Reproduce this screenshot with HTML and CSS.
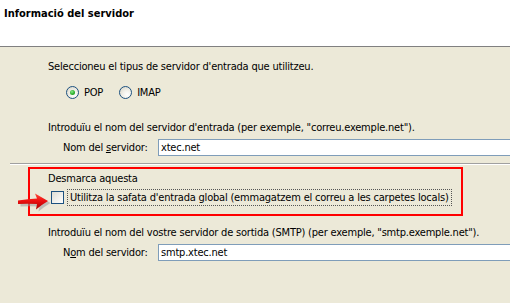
FILE: index.html
```html
<!DOCTYPE html>
<html>
<head>
<meta charset="utf-8">
<link rel="stylesheet" href="styles.css">
</head>
<body>
<div class="header"><h1 class="title">Informació del servidor</h1></div>
<div class="content">
  <p class="text first">Seleccioneu el tipus de servidor d'entrada que utilitzeu.</p>
  <div class="radios">
    <span class="radio checked"></span><span class="rlabel pop">POP</span>
    <span class="radio"></span><span class="rlabel">IMAP</span>
  </div>
  <p class="text p2">Introduïu el nom del servidor d'entrada (per exemple, "correu.exemple.net").</p>
  <div class="field">
    <span class="flabel">Nom del <u>s</u>ervidor:</span>
    <span class="input">xtec.net</span>
  </div>
  <div class="groove"></div>
  <p class="text p3">Desmarca aquesta</p>
  <div class="checkrow">
    <span class="checkbox"></span>
    <span class="clabel">Utilitza la safata d'entrada global (emmagatzem el correu a les carpetes locals)</span>
  </div>
  <p class="text p4">Introduïu el nom del vostre servidor de sortida (SMTP) (per exemple, "smtp.exemple.net").</p>
  <div class="field">
    <span class="flabel">N<u>o</u>m del servidor:</span>
    <span class="input">smtp.xtec.net</span>
  </div>
</div>
<div class="redbox"></div>
<svg class="arrow" width="34" height="22" viewBox="0 0 34 22">
  <defs>
    <linearGradient id="ag" x1="0" y1="0" x2="0" y2="1">
      <stop offset="0" stop-color="#ff4a3a"/>
      <stop offset="0.45" stop-color="#ee1010"/>
      <stop offset="1" stop-color="#a80000"/>
    </linearGradient>
  </defs>
  <path d="M2 10 Q12 8.5 21 8 L19 3 Q26 7 32 10.5 Q26 14 20 19 L21 14 Q12 13.5 2 14 Z" fill="#9a9a9a" opacity="0.55" transform="translate(1.5,1.5)"/>
  <path d="M1 9.5 Q11 8 20 7.5 L18 2.5 Q25 6.5 31 10 Q25 13.5 19 18.5 L20 13 Q11 12.5 1 13 Z" fill="url(#ag)"/>
</svg>
</body>
</html>
```

FILE: styles.css
```css
html, body {
  margin: 0;
  padding: 0;
}
body {
  width: 510px;
  height: 303px;
  overflow: hidden;
  position: relative;
  background: #ece9d8;
  font-family: "DejaVu Sans Condensed", "DejaVu Sans", sans-serif;
  font-stretch: condensed;
  font-size: 11px;
  line-height: 13px;
  letter-spacing: -0.2px;
  color: #000;
}
.header {
  background: #fff;
  border-bottom: 1px solid #808080;
  padding: 7px 0 0 4px;
  height: 39px;
}
.title {
  margin: 0;
  font-size: 11px;
  line-height: 13px;
  font-weight: bold;
  letter-spacing: 0;
}
.content {
  display: flex;
  flex-direction: column;
}
.text {
  margin: 0;
  padding-left: 48px;
  height: 13px;
  white-space: nowrap;
}
.first { margin-top: 13px; }
.radios {
  margin-top: 13px;
  padding-left: 66px;
  height: 13px;
  display: flex;
  align-items: center;
}
.radio {
  width: 13px;
  height: 13px;
  box-sizing: border-box;
  border: 1px solid #1c5180;
  border-radius: 50%;
  background: radial-gradient(circle at 65% 70%, #fff 0%, #f2f1ea 40%, #d6d3c4 100%);
  display: flex;
  align-items: center;
  justify-content: center;
}
.radio.checked::after {
  content: "";
  width: 5px;
  height: 5px;
  border-radius: 50%;
  background: radial-gradient(circle at 40% 35%, #8de88d 0%, #31b531 50%, #1a8a1a 100%);
}
.rlabel { margin-left: 5px; }
.rlabel.pop { margin-right: 16px; }
.p2 { margin-top: 22px; }
.field {
  margin-top: 5px;
  padding-left: 63px;
  display: flex;
  align-items: center;
  height: 17px;
}
.flabel {
  width: 95px;
  flex: none;
  white-space: nowrap;
}
.input {
  flex: 1;
  height: 17px;
  box-sizing: border-box;
  border: 1px solid #7f9db9;
  border-right: 0;
  background: #fff;
  padding: 1px 0 0 2px;
  line-height: 13px;
}
.groove {
  margin-top: 7px;
  margin-left: 10px;
  height: 1px;
  background: #a0a0a0;
  border-bottom: 1px solid #fff;
}
.p3 { margin-top: 7px; }
.checkrow {
  margin-top: 4px;
  height: 17px;
  padding-left: 51px;
  display: flex;
  align-items: center;
}
.checkbox {
  width: 13px;
  height: 13px;
  box-sizing: border-box;
  border: 1px solid #1c5180;
  background: linear-gradient(135deg, #dcdcd4 0%, #f0f0ec 55%, #fff 100%);
  flex: none;
}
.clabel {
  margin-left: 3px;
  height: 17px;
  box-sizing: border-box;
  border: 1px dotted #555;
  padding: 1px 2px 0 2px;
  white-space: nowrap;
}
.p4 { margin-top: 20px; }
.redbox {
  position: absolute;
  left: 28px;
  top: 167px;
  width: 435px;
  height: 49px;
  box-sizing: border-box;
  border: 2px solid #ff0000;
}
.arrow {
  position: absolute;
  left: 17px;
  top: 191px;
}
```
